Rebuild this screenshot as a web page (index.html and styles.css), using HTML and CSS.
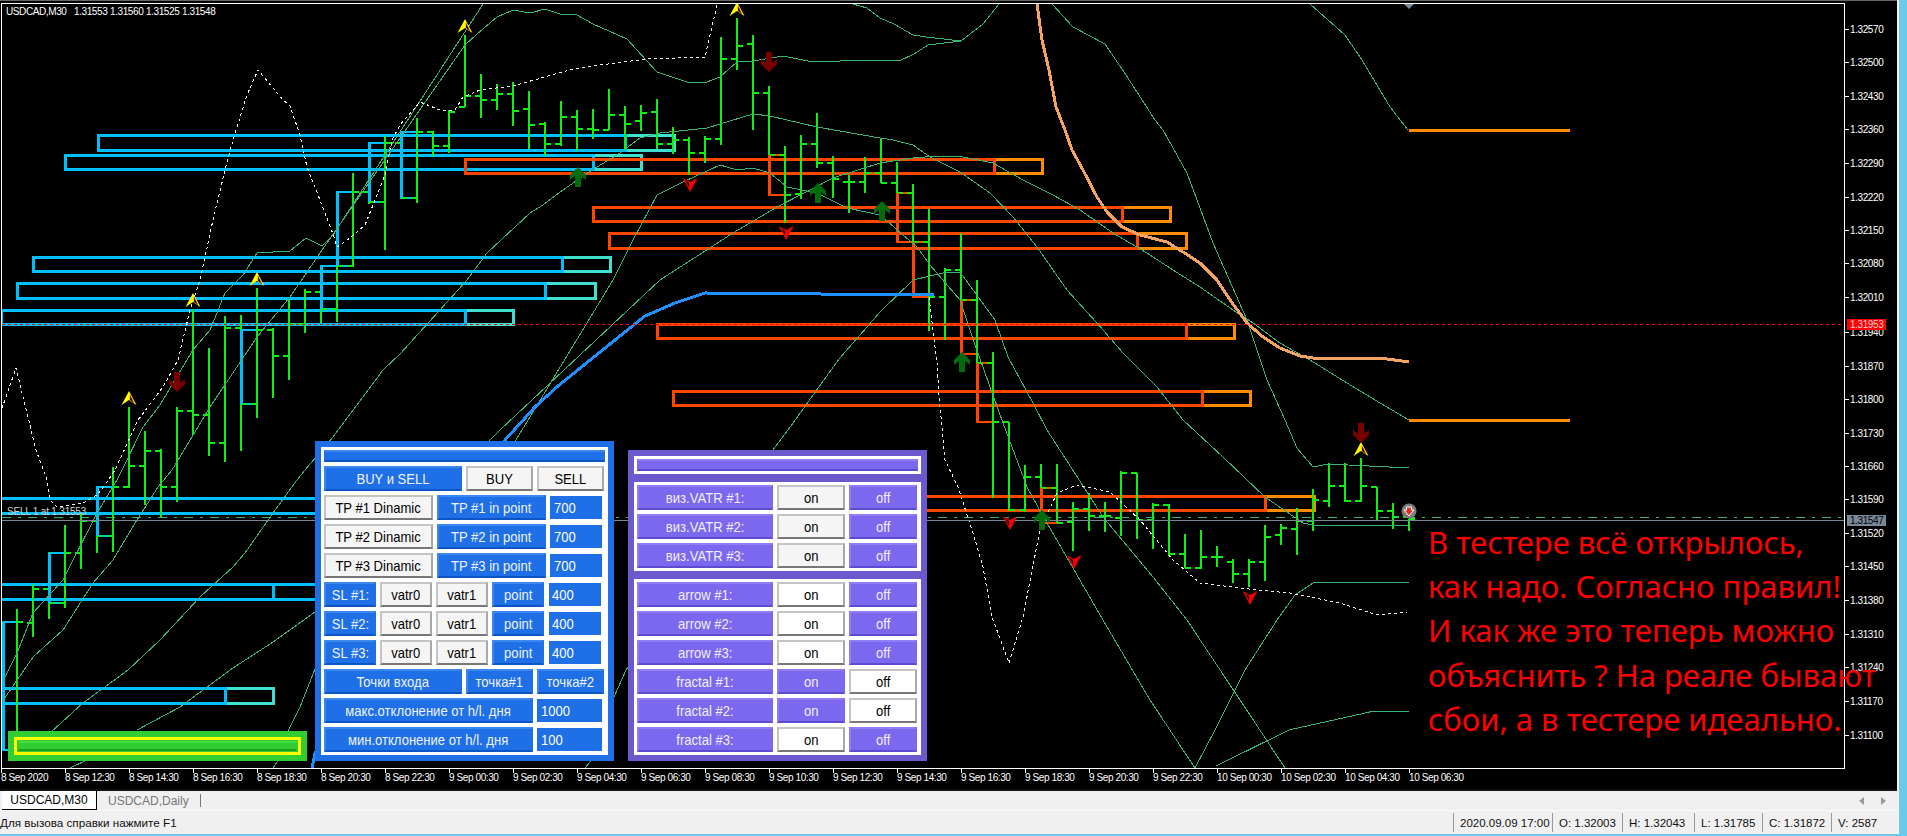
FILE: index.html
```html
<!DOCTYPE html>
<html lang="ru">
<head>
<meta charset="utf-8">
<title>USDCAD,M30</title>
<link rel="stylesheet" href="styles.css">
</head>
<body>
<div class="window">
  <div class="terminal">
    <div class="chart">
      <svg class="plot" width="1897" height="789" viewBox="0 0 1897 789">
        <defs>
          <clipPath id="frame"><rect x="2" y="4" width="1842" height="764"/></clipPath>
          <symbol id="yup" overflow="visible"><polygon class="ya" points="-7.500,7 0,-7 7.500,7 0,2"/><polygon class="yb" points="1,-3 5,5 1,2"/></symbol>
          <symbol id="rdn" overflow="visible"><polygon class="ra" points="-7.500,-6 0,-2 7.500,-6 0,8"/><polygon class="rb" points="-5,-4 -1,-1 -1,4"/></symbol>
          <symbol id="gup" overflow="visible"><polygon class="ga" points="0,-10 8,-2 8,3 3,-1 3,10 -3,10 -3,-1 -8,3 -8,-2"/></symbol>
          <symbol id="mdn" overflow="visible"><polygon class="ma" points="0,10 8,2 8,-3 3,1 3,-10 -3,-10 -3,1 -8,-3 -8,2"/></symbol>
        </defs>
        <g clip-path="url(#frame)">
          <g class="ext">
            <path class="tq" d="M625 135H674V150H625M593 155H641V169H593M562 257H610V271H562M545 283H595V298H545M465 310H513V324H465"/>
            <path class="tq" d="M273 584H320M273 599H320M225 688H273V703H225"/>
            <path class="or" d="M994 159H1042V173H994M1122 207H1170V221H1122M1137 233H1186V248H1137M1186 324H1234V338H1186M1202 391H1250V405H1202M1265 496H1314V510H1265"/>
          </g>
          <g class="boxes">
            <path class="cy" d="M625 135H98V150H625ZM593 155H65V169H593ZM562 257H33V271H562ZM545 283H17V298H545ZM465 310H1V324H465Z"/>
            <path class="cy" d="M0 498H320M0 513H320M320 584H0M0 599H320M225 688H0V703H225Z M273 584V599"/>
            <path class="rd" d="M994 159H465V173H994ZM1122 207H593V221H1122ZM1137 233H609V248H1137ZM1186 324H657V338H1186ZM1202 391H673V405H1202ZM1265 496H800M800 510H1265V496"/>
            <path class="cb" d="M369 143H385V202H369ZM401 132H417V198H401ZM337 192H353V266H337ZM321 266H337V309H321ZM241 330H257V404H241ZM97 487H113V536H97ZM49 553H65V603H49ZM3 622H17V750H3Z"/>
            <path class="rb2" d="M769 155H785V195H769ZM897 193H913V242H897ZM913 242H929V297H913ZM961 300H977V354H961ZM977 363H993V422H977ZM1041 488H1057V523H1041Z"/>
          </g>
          <path class="bars" d="M17 609V755M11 750h6M17 622h6M33 584V637M27 623h6M33 589h6M49 552V619M43 589h6M49 603h6M65 525V608M59 603h6M65 553h6M81 513V569M75 553h6M81 521h6M97 487V553M91 521h6M97 536h6M113 467V552M107 536h6M113 487h6M129 407V488M123 487h6M129 466h6M145 431V505M139 466h6M145 451h6M161 449V517M155 451h6M161 487h6M177 407V502M171 487h6M177 411h6M193 309V435M187 411h6M193 415h6M209 348V456M203 415h6M209 443h6M225 316V462M219 443h6M225 328h6M241 315V451M235 328h6M241 404h6M257 288V418M251 404h6M257 330h6M273 328V398M267 330h6M273 356h6M289 300V380M283 356h6M289 324h6M305 289V333M299 324h6M305 292h6M321 266V323M315 292h6M321 309h6M337 257V322M331 309h6M337 266h6M353 173V267M347 266h6M353 192h6M369 143V204M363 192h6M369 202h6M385 136V250M379 202h6M385 143h6M401 132V198M395 143h6M401 198h6M417 118V203M411 198h6M417 132h6M433 131V157M427 132h6M433 146h6M449 110V153M443 146h6M449 112h6M465 35V107M459 107h6M465 96h6M481 74V118M475 96h6M481 100h6M497 84V110M491 100h6M497 94h6M513 82V126M507 94h6M513 111h6M529 91V149M523 109h6M529 125h6M545 122V156M539 124h6M545 144h6M561 101V146M555 144h6M561 117h6M577 110V151M571 117h6M577 129h6M593 109V139M587 129h6M593 130h6M609 89V130M603 130h6M609 115h6M625 106V150M619 115h6M625 124h6M641 105V131M635 121h6M641 113h6M657 99V149M651 112h6M657 144h6M673 127V154M667 144h6M673 140h6M689 137V175M683 140h6M689 153h6M705 136V163M699 153h6M705 139h6M721 37V145M715 139h6M721 59h6M737 18V70M731 59h6M737 46h6M753 35V130M747 44h6M753 93h6M769 86V170M763 93h6M769 155h6M785 146V223M779 155h6M785 195h6M801 135V199M795 194h6M801 144h6M817 113V168M811 144h6M817 163h6M833 156V198M827 163h6M833 179h6M849 175V213M843 182h6M849 182h6M865 157V193M859 182h6M865 173h6M881 138V183M875 173h6M881 183h6M897 162V205M891 183h6M897 193h6M913 184V249M907 193h6M913 242h6M929 209V331M923 242h6M929 297h6M945 268V340M939 297h6M945 270h6M961 233V330M955 270h6M961 300h6M977 280V407M971 300h6M977 363h6M993 352V498M987 363h6M993 422h6M1009 422V511M1003 422h6M1009 510h6M1025 465V512M1019 510h6M1025 477h6M1041 464V521M1035 477h6M1041 488h6M1057 464V523M1051 488h6M1057 523h6M1073 502V551M1067 522h6M1073 509h6M1089 493V531M1083 509h6M1089 516h6M1105 502V532M1099 516h6M1105 516h6M1121 471V536M1115 518h6M1121 473h6M1137 473V539M1131 473h6M1137 520h6M1153 503V549M1147 520h6M1153 505h6M1169 504V556M1163 505h6M1169 554h6M1185 534V568M1179 554h6M1185 568h6M1201 530V569M1195 568h6M1201 557h6M1217 546V567M1211 557h6M1217 557h6M1233 559V583M1227 562h6M1233 574h6M1249 559V587M1243 574h6M1249 562h6M1265 525V581M1259 562h6M1265 537h6M1281 524V545M1275 535h6M1281 528h6M1297 508V555M1291 529h6M1297 521h6M1313 489V531M1307 521h6M1313 500h6M1329 463V507M1323 501h6M1329 486h6M1345 463V502M1339 486h6M1345 501h6M1361 458V502M1355 501h6M1361 486h6M1377 487V520M1371 487h6M1377 511h6M1393 503V529M1387 511h6M1393 517h6M1409 519V531M1403 517h6M1409 519h6"/>
          <path class="cyl" d="M369 143V202M401 132V198M337 192V266M321 266V309M241 330V404M97 487V536M49 553V603M3 622V750"/>
          <path class="rdl" d="M769 155V195M897 193V242M913 242V297M961 300V354M977 363V422M1041 488V523"/>
          <g class="bands">
            <polyline points="2,702 33,657 63,630 93,583 113,560 137,520 158,487 172,470 210,407 257,337 290,297 322,250 465,45 476,35 497,17 513,10 530,13 545,9 560,14 577,15 593,24 627,39 657,72 687,82 707,82 720,77 737,62 753,61 783,56 813,62 867,60 899,61 914,54 928,45 961,41 983,24 999,4"/>
            <polyline points="2,683 17,653 33,613 63,580 97,513 117,480 122,470 143,427 160,405 193,350 210,330 225,293 243,275 257,253 290,251 306,238 322,246 333,235 483,4"/>
            <polyline points="50,733 83,703 128,670 160,640 200,597 233,567 245,553 273,513 297,480 305,470 333,437 383,370 400,354 467,280 487,253 530,213 543,205 563,190 592,170 617,155 640,138 660,133 707,128 753,114 770,116 817,127 880,138 893,140 913,145 930,157 960,172 990,193 1013,217 1037,247 1067,290 1097,323 1123,353 1157,387 1183,420 1223,457 1265,497 1303,523 1313,525 1340,526 1409,525"/>
            <polyline points="137,730 180,707 233,668 273,642 315,612 490,440 500,430 660,280 733,233 777,207 833,178 880,163 913,158 937,156 963,157 993,163 1023,180 1053,195 1080,210 1113,233 1147,253 1173,270 1200,287 1233,310 1253,323 1280,343 1310,360 1347,383 1380,403 1409,420"/>
            <polyline points="273,768 277,762 287,733 300,707 315,669 516,440 522,430 613,280 633,240 657,195 683,182 720,165 737,170 753,168 770,173 787,187 817,193 847,208 880,215 917,247 930,265 960,300 975,345 1003,423 1027,487 1047,523 1103,620 1150,700 1195,768"/>
            <polyline points="585,768 590,762 614,697 626,670 773,450 788,430 839,359 880,312 913,280 943,273 960,272 995,320 1008,357 1033,403 1047,430 1103,517 1153,577 1187,620 1240,700 1285,768"/>
            <polyline points="853,4 867,8 880,18 894,24 913,35 926,37 961,41"/>
            <polyline points="1052,4 1073,27 1105,44 1126,75 1155,120 1163,130 1187,173 1213,243 1247,320 1267,380 1285,420 1297,448 1313,467 1328,464 1409,468"/>
            <polyline points="1310,4 1345,35 1362,60 1390,107 1408,130"/>
            <polyline points="1195,768 1215,730 1245,670 1277,620 1295,595 1313,583 1409,582"/>
            <polyline points="1216,766 1289,730 1374,711 1409,711"/>
            <polyline points="70,768 87,760 140,735"/>
          </g>
          <g class="dots">
            <polyline points="0,414 16,368 36,450 47,480 50,500 57,507 83,503 97,495 107,482 115,470 138,420 163,387 178,360 190,310 200,280 213,220 225,170 233,140 247,95 258,70 283,100 290,106 300,135 307,167 320,200 333,234 337,247 350,238 365,225 385,175 392,140 400,125 420,102 440,110 455,110 463,97 480,90 513,86 527,82 573,69 600,65 647,59 705,57 717,5"/>
            <polyline points="929,297 933,330 937,363 939,397 942,427 945,460 958,487 973,533 983,567 992,617 1009,663 1023,617 1040,530 1057,493 1077,485 1110,492 1140,520 1173,560 1200,583 1257,590 1290,593 1340,603 1377,615 1407,612"/>
          </g>
          <polyline class="blueline" points="312,768 315,753 505,440 535,407 558,386 584,365 615,340 645,316 675,303 705,293 934,295"/>
          <polyline class="sand" points="1037,4 1042,40 1049,70 1056,107 1065,130 1072,150 1083,170 1097,197 1107,212 1122,227 1140,235 1167,242 1183,252 1200,263 1217,280 1230,300 1247,323 1263,337 1280,348 1300,356 1313,358 1380,358 1409,362"/>
          <path class="stub" d="M1409 130H1570M1409 420H1570"/>
          <path class="bid" d="M2 324H1844"/>
          <path class="ask" d="M2 520H1844"/>
          <path class="dashgreen" d="M2 517.500H1844"/>
          <polygon class="topmark" points="1404,4 1414,4 1409,9"/>
          <use href="#yup" x="465" y="26"/><use href="#yup" x="737" y="9"/><use href="#yup" x="1361" y="449"/>
          <use href="#yup" x="129" y="398"/><use href="#yup" x="193" y="300"/><use href="#yup" x="257" y="279"/>
          <use href="#rdn" x="1010" y="522"/><use href="#rdn" x="1074" y="561"/><use href="#rdn" x="1250" y="597"/>
          <use href="#rdn" x="690" y="184"/><use href="#rdn" x="786" y="232"/>
          <use href="#gup" x="578" y="177"/><use href="#gup" x="818" y="193"/><use href="#gup" x="882" y="211"/>
          <use href="#gup" x="962" y="362"/><use href="#gup" x="1042" y="520"/>
          <use href="#mdn" x="769" y="62"/><use href="#mdn" x="177" y="382"/><use href="#mdn" x="1361" y="433"/>
          <circle class="tradec" cx="1409" cy="511" r="7.500"/>
          <polygon class="tradea" points="1409,516 1404,510 1406.500,510 1406.500,507 1411.500,507 1411.500,510 1414,510"/>
        </g>
        <rect class="frameline" x="1.500" y="3.500" width="1843" height="765"/>
        <path class="ticks" d="M1845 29h4M1845 62h4M1845 96h4M1845 129h4M1845 163h4M1845 197h4M1845 230h4M1845 263h4M1845 297h4M1845 332h4M1845 366h4M1845 399h4M1845 433h4M1845 466h4M1845 499h4M1845 533h4M1845 566h4M1845 600h4M1845 634h4M1845 667h4M1845 701h4M1845 735h4M1.500 769v4M65.500 769v4M129.500 769v4M193.500 769v4M257.500 769v4M321.500 769v4M385.500 769v4M449.500 769v4M513.500 769v4M577.500 769v4M641.500 769v4M705.500 769v4M769.500 769v4M833.500 769v4M897.500 769v4M961.500 769v4M1025.500 769v4M1089.500 769v4M1153.500 769v4M1217.500 769v4M1281.500 769v4M1345.500 769v4M1409.500 769v4"/>
        <g class="axis">
          <text x="1850" y="33">1.32570</text><text x="1850" y="66">1.32500</text><text x="1850" y="100">1.32430</text><text x="1850" y="133">1.32360</text><text x="1850" y="167">1.32290</text><text x="1850" y="201">1.32220</text><text x="1850" y="234">1.32150</text><text x="1850" y="267">1.32080</text><text x="1850" y="301">1.32010</text><text x="1850" y="336">1.31940</text><text x="1850" y="370">1.31870</text><text x="1850" y="403">1.31800</text><text x="1850" y="437">1.31730</text><text x="1850" y="470">1.31660</text><text x="1850" y="503">1.31590</text><text x="1850" y="537">1.31520</text><text x="1850" y="570">1.31450</text><text x="1850" y="604">1.31380</text><text x="1850" y="638">1.31310</text><text x="1850" y="671">1.31240</text><text x="1850" y="705">1.31170</text><text x="1850" y="739">1.31100</text>
          <text x="1" y="781">8 Sep 2020</text><text x="65" y="781">8 Sep 12:30</text><text x="129" y="781">8 Sep 14:30</text><text x="193" y="781">8 Sep 16:30</text><text x="257" y="781">8 Sep 18:30</text><text x="321" y="781">8 Sep 20:30</text><text x="385" y="781">8 Sep 22:30</text><text x="449" y="781">9 Sep 00:30</text><text x="513" y="781">9 Sep 02:30</text><text x="577" y="781">9 Sep 04:30</text><text x="641" y="781">9 Sep 06:30</text><text x="705" y="781">9 Sep 08:30</text><text x="769" y="781">9 Sep 10:30</text><text x="833" y="781">9 Sep 12:30</text><text x="897" y="781">9 Sep 14:30</text><text x="961" y="781">9 Sep 16:30</text><text x="1025" y="781">9 Sep 18:30</text><text x="1089" y="781">9 Sep 20:30</text><text x="1153" y="781">9 Sep 22:30</text><text x="1217" y="781">10 Sep 00:30</text><text x="1281" y="781">10 Sep 02:30</text><text x="1345" y="781">10 Sep 04:30</text><text x="1409" y="781">10 Sep 06:30</text>
          <text x="6" y="15">USDCAD,M30</text><text x="74" y="15">1.31553</text><text x="110" y="15">1.31560</text><text x="146" y="15">1.31525</text><text x="182" y="15">1.31548</text>
          <text class="selltag" x="7" y="515">SELL 1 at 1.31553</text>
        </g>
        <rect class="bidtag" x="1847" y="319" width="39" height="11"/>
        <text class="bidtext" x="1850" y="328">1.31953</text>
        <rect class="asktag" x="1847" y="515" width="39" height="11"/>
        <text class="asktext" x="1850" y="524">1.31547</text>
      </svg>

      <div class="mini">
        <div class="mini-frame"><div class="mini-bar"></div></div>
      </div>

      <div class="panel panel-blue">
        <div class="inner">
          <div class="titlebar b"></div>
          <div class="row">
            <div class="btn b w138"><span>BUY и SELL</span></div>
            <div class="btn l w67"><span>BUY</span></div>
            <div class="btn l w67"><span>SELL</span></div>
          </div>
          <div class="row">
            <div class="btn l w109"><span>TP #1 Dinamic</span></div>
            <div class="btn b w109"><span>TP #1 in point</span></div>
            <div class="field w52"><span>700</span></div>
          </div>
          <div class="row">
            <div class="btn l w109"><span>TP #2 Dinamic</span></div>
            <div class="btn b w109"><span>TP #2 in point</span></div>
            <div class="field w52"><span>700</span></div>
          </div>
          <div class="row">
            <div class="btn l w109"><span>TP #3 Dinamic</span></div>
            <div class="btn b w109"><span>TP #3 in point</span></div>
            <div class="field w52"><span>700</span></div>
          </div>
          <div class="row">
            <div class="btn b w52"><span>SL #1:</span></div>
            <div class="btn l w52"><span>vatr0</span></div>
            <div class="btn l w52"><span>vatr1</span></div>
            <div class="btn b w52"><span>point</span></div>
            <div class="field f-tight w52"><span>400</span></div>
          </div>
          <div class="row">
            <div class="btn b w52"><span>SL #2:</span></div>
            <div class="btn l w52"><span>vatr0</span></div>
            <div class="btn l w52"><span>vatr1</span></div>
            <div class="btn b w52"><span>point</span></div>
            <div class="field f-tight w52"><span>400</span></div>
          </div>
          <div class="row">
            <div class="btn b w52"><span>SL #3:</span></div>
            <div class="btn l w52"><span>vatr0</span></div>
            <div class="btn l w52"><span>vatr1</span></div>
            <div class="btn b w52"><span>point</span></div>
            <div class="field f-tight w52"><span>400</span></div>
          </div>
          <div class="row">
            <div class="btn b w138"><span>Точки входа</span></div>
            <div class="btn b w67"><span>точка#1</span></div>
            <div class="btn b w67"><span>точка#2</span></div>
          </div>
          <div class="row">
            <div class="btn b w209"><span>макс.отклонение от h/l. дня</span></div>
            <div class="field w65"><span>1000</span></div>
          </div>
          <div class="row">
            <div class="btn b w209"><span>мин.отклонение от h/l. дня</span></div>
            <div class="field w65"><span>100</span></div>
          </div>
        </div>
      </div>

      <div class="panel panel-purple">
        <div class="inner head"><div class="titlebar p"></div></div>
        <div class="inner">
          <div class="row"><div class="btn p w136"><span>виз.VATR #1:</span></div><div class="btn l w68"><span>on</span></div><div class="btn p w68"><span>off</span></div></div>
          <div class="row"><div class="btn p w136"><span>виз.VATR #2:</span></div><div class="btn l w68"><span>on</span></div><div class="btn p w68"><span>off</span></div></div>
          <div class="row"><div class="btn p w136"><span>виз.VATR #3:</span></div><div class="btn l w68"><span>on</span></div><div class="btn p w68"><span>off</span></div></div>
        </div>
        <div class="inner">
          <div class="row"><div class="btn p w136"><span>arrow #1:</span></div><div class="btn w w68"><span>on</span></div><div class="btn p w68"><span>off</span></div></div>
          <div class="row"><div class="btn p w136"><span>arrow #2:</span></div><div class="btn w w68"><span>on</span></div><div class="btn p w68"><span>off</span></div></div>
          <div class="row"><div class="btn p w136"><span>arrow #3:</span></div><div class="btn w w68"><span>on</span></div><div class="btn p w68"><span>off</span></div></div>
          <div class="row"><div class="btn p w136"><span>fractal #1:</span></div><div class="btn p w68"><span>on</span></div><div class="btn w w68"><span>off</span></div></div>
          <div class="row"><div class="btn p w136"><span>fractal #2:</span></div><div class="btn p w68"><span>on</span></div><div class="btn w w68"><span>off</span></div></div>
          <div class="row"><div class="btn p w136"><span>fractal #3:</span></div><div class="btn w w68"><span>on</span></div><div class="btn p w68"><span>off</span></div></div>
        </div>
      </div>

      <div class="note">В тестере всё открылось,<br>как надо. Согласно правил!<br>И как же это теперь можно<br>объяснить ? На реале бывают<br>сбои, а в тестере идеально.</div>
    </div>

    <div class="tabs">
      <div class="tab active">USDCAD,M30</div>
      <div class="tab">USDCAD,Daily</div>
      <div class="tabsep"></div>
      <div class="tabarrows">
        <svg width="6" height="8" viewBox="0 0 6 8"><polygon class="arrowg" points="5,0 5,8 0,4"/></svg>
        <svg width="6" height="8" viewBox="0 0 6 8"><polygon class="arrowg" points="0,0 0,8 5,4"/></svg>
      </div>
    </div>

    <div class="status">
      <div class="status-help">Для вызова справки нажмите F1</div>
      <div class="cell c-date">2020.09.09 17:00</div>
      <div class="cell c-o">O: 1.32003</div>
      <div class="cell c-h">H: 1.32043</div>
      <div class="cell c-l">L: 1.31785</div>
      <div class="cell c-c">C: 1.31872</div>
      <div class="cell c-v">V: 2587</div>
    </div>
  </div>
  <div class="strip"></div>
</div>
<div class="strip-bottom"></div>
</body>
</html>
```

FILE: styles.css
```css
* { box-sizing: border-box; }
html, body { margin: 0; padding: 0; }
body {
  width: 1907px;
  height: 836px;
  overflow: hidden;
  background: #6bc9ea;
  font-family: "Liberation Sans", Arial, sans-serif;
  display: flex;
  flex-direction: column;
}
.window { display: flex; height: 834px; }
.terminal { width: 1899px; display: flex; flex-direction: column; background: #f0f0f0; border-right: 2px solid #f4f4f4; }
.strip { width: 8px; background: #6bc9ea; }
.strip-bottom { height: 2px; background: #6bc9ea; }

/* chart canvas */
.chart { position: relative; width: 1897px; height: 789px; background: #000; border-top: 1px solid #666; overflow: hidden; }
.plot { position: absolute; left: 0; top: -1px; display: block; }
.bars { fill: none; stroke: #10f010; stroke-width: 2; shape-rendering: crispEdges; }
.boxes path, .ext path { fill: none; stroke-width: 3; shape-rendering: crispEdges; }
.tq { stroke: #40e0d0; }
.or { stroke: #ff8c00; }
.cy { stroke: #00bfff; }
.rd { stroke: #ff4500; }
.boxes .cb { stroke: #00bfff; stroke-width: 2; }
.boxes .rb2 { stroke: #ff4500; stroke-width: 2; }
.cyl { fill: none; stroke: #00bfff; stroke-width: 3; shape-rendering: crispEdges; }
.rdl { fill: none; stroke: #ff4500; stroke-width: 3; shape-rendering: crispEdges; }
.bands polyline { fill: none; stroke: #3cb371; stroke-width: 1; shape-rendering: crispEdges; }
.dots polyline { fill: none; stroke: #f2f2f2; stroke-width: 1; stroke-dasharray: 3 3; shape-rendering: crispEdges; }
.blueline { fill: none; stroke: #1e90ff; stroke-width: 3; shape-rendering: crispEdges; }
.sand { fill: none; stroke: #f4a460; stroke-width: 3; shape-rendering: crispEdges; }
.stub { fill: none; stroke: #ff8c00; stroke-width: 3; shape-rendering: crispEdges; }
.bid { stroke: #ff0000; stroke-width: 1; stroke-dasharray: 3 3; shape-rendering: crispEdges; }
.ask { stroke: #778899; stroke-width: 1; shape-rendering: crispEdges; }
.dashgreen { stroke: #3cb371; stroke-width: 1; stroke-dasharray: 9 7 3 7; shape-rendering: crispEdges; }
.topmark { fill: #778899; }
.ya { fill: #ffff00; }
.yb { fill: #000; stroke: #f03020; stroke-width: .5; }
.ra { fill: #f00000; }
.rb { fill: #000; stroke: #f00000; stroke-width: .4; }
.ga { fill: #006c0c; }
.ma { fill: #7a0000; }
.tradec { fill: #7d7d7d; }
.tradea { fill: #e03020; stroke: #fff; stroke-width: 1; }
.frameline { fill: none; stroke: #fff; stroke-width: 1; shape-rendering: crispEdges; }
.ticks { fill: none; stroke: #fff; stroke-width: 1; shape-rendering: crispEdges; }
.axis text { fill: #fff; font-size: 10px; letter-spacing: -.4px; font-family: "Liberation Sans", Arial, sans-serif; }
.axis .selltag { fill: #cfcfcf; letter-spacing: -.2px; }
.bidtag { fill: #ff0000; }
.bidtext { fill: #f4d0d0; font-size: 10px; letter-spacing: -.4px; }
.asktag { fill: #778899; }
.asktext { fill: #000; font-size: 10px; letter-spacing: -.4px; }

/* trade-panel overlays */
.panel { position: absolute; display: flex; flex-direction: column; color: #fff; font-size: 15px; }
.panel-blue { left: 315px; top: 440px; width: 299px; height: 320px; background: #1f6fe6; padding: 6px; }
.panel-purple { left: 628px; top: 449px; width: 299px; height: 311px; background: #6a5acd; padding: 6px; gap: 8px; }
.inner { background: #fff; padding: 3px; display: flex; flex-direction: column; gap: 4px; flex: 0 0 auto; }
.panel-blue .inner { height: 308px; }
.panel-purple .inner.head { height: 18px; }
.titlebar { height: 12px; width: 100%; border-style: solid; border-width: 2px 1px; }
.titlebar.b { background: #1f6fe6; border-color: #3d88ef #1f6fe6 #0d55c4; }
.titlebar.p { background: #7b68ee; border-color: #8f7ef5 #7b68ee #5a4bd0; }
.row { display: flex; gap: 4px; height: 25px; }
.btn { height: 25px; display: flex; align-items: center; justify-content: center; white-space: nowrap; border-style: solid; border-width: 2px; flex: 0 0 auto; overflow: hidden; }
.btn span { display: inline-block; transform: scaleX(.87); }
.btn.b { background: #1f6fe6; border-color: #3d88ef #1f6fe6 #0d55c4 #3d88ef; color: #f0f4ff; }
.btn.p { background: #7b68ee; border-color: #8f7ef5 #7b68ee #5a4bd0 #8f7ef5; color: #f2f0ff; }
.btn.l { background: #f5f5f5; border-color: #c4c4c4 #a8a8a8 #777 #c4c4c4; color: #000; }
.btn.w { background: #fff; border-color: #c4c4c4 #a8a8a8 #777 #c4c4c4; color: #000; }
.field { background: #1f6fe6; color: #fff; height: 23px; margin-top: 1px; padding-left: 4px; display: flex; align-items: center; flex: 0 0 auto; }
.field span { display: inline-block; transform: scaleX(.87); transform-origin: left center; }
.f-tight { margin-left: 1px; padding-left: 3px; }
.w52 { width: 52px; }
.w65 { width: 65px; }
.w67 { width: 67px; }
.w68 { width: 68px; }
.w109 { width: 109px; }
.w136 { width: 136px; }
.w138 { width: 138px; }
.w209 { width: 209px; }
.mini { position: absolute; left: 8px; top: 730px; width: 299px; height: 30px; background: #32cd32; padding: 6px; }
.mini-frame { height: 18px; border: 3px solid #ffff00; background: #32cd32; padding: 1px; }
.mini-bar { height: 10px; background: #32cd32; border-style: solid; border-width: 2px 1px; border-color: #45de45 #32cd32 #18a018; }
.note {
  position: absolute; left: 1428px; top: 519px;
  color: #ff0000;
  font-family: "Noto Sans", "Open Sans", sans-serif;
  font-size: 31px; line-height: 44.2px; white-space: nowrap;
}

/* tabs + status */
.tabs { height: 22px; width: 1897px; display: flex; align-items: stretch; position: relative; background: #f0f0f0; border-top: 2px solid #111; border-bottom: 1px solid #fafafa; font-size: 12px; padding-left: 2px; }
.tab { padding: 0 11px; display: flex; align-items: center; color: #777; }
.tab.active { width: 95px; background: #fff; color: #000; border-right: 1px solid #000; border-bottom: 1px solid #000; justify-content: center; padding: 0; }
.tabsep { width: 1px; background: #777; margin: 3px 0 3px 0; }
.tabarrows { position: absolute; right: 10px; top: 6px; display: flex; gap: 16px; }
.arrowg { fill: #999; }
.status { height: 23px; width: 1897px; display: flex; align-items: center; font-size: 11.500px; color: #111; background: #f0f0f0; }
.status-help { flex: 0 0 1453px; font-size: 11.700px; }
.cell { height: 19px; border-left: 1px solid #999; padding-left: 6px; display: flex; align-items: center; flex: 0 0 auto; white-space: nowrap; }
.c-date { width: 99px; }
.c-o { width: 70px; }
.c-h { width: 72px; }
.c-l { width: 68px; }
.c-c { width: 69px; }
.c-v { width: 66px; }
```
